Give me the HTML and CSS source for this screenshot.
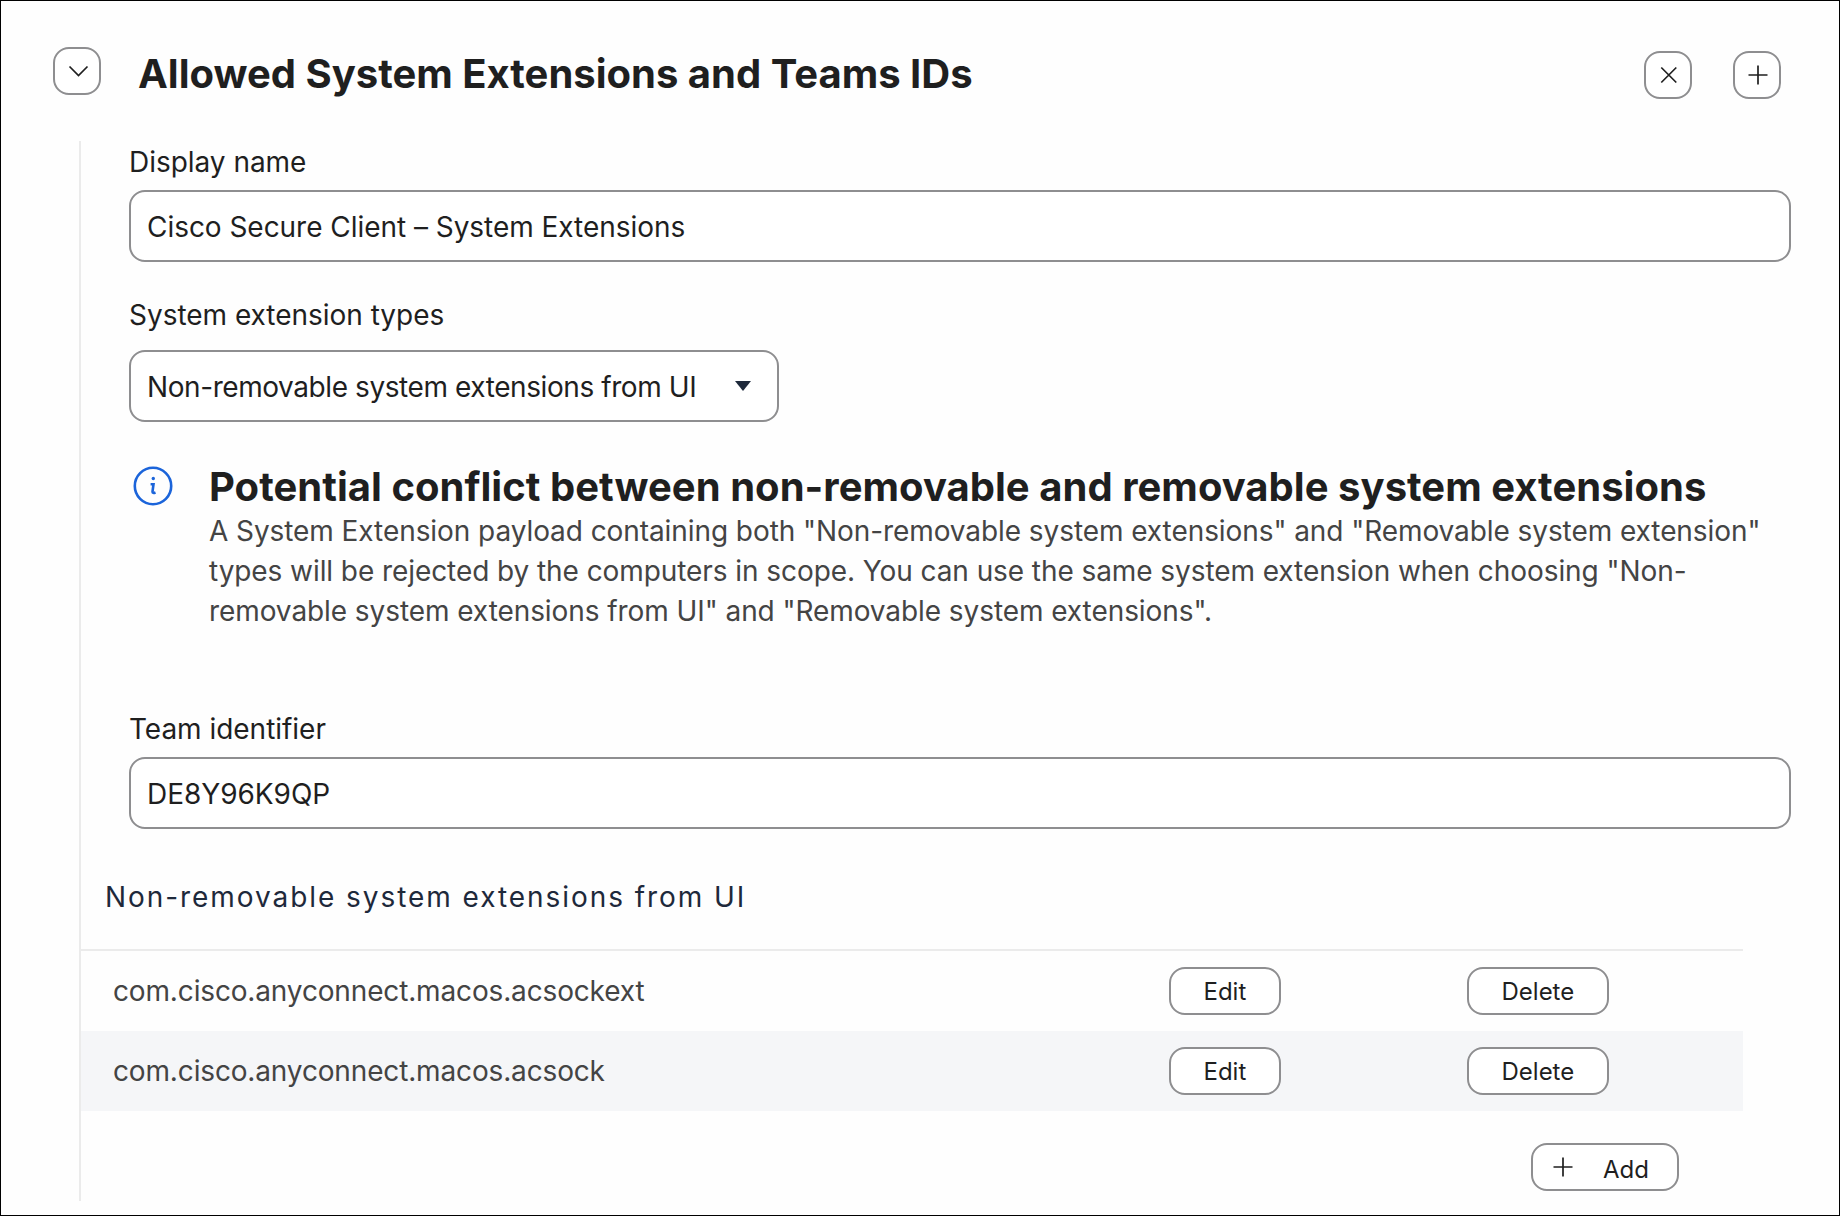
FILE: index.html
```html
<!DOCTYPE html>
<html lang="en">
<head>
  <meta charset="UTF-8">
  <title>Allowed System Extensions and Teams IDs</title>
  <link rel="stylesheet" href="styles.css">
</head>
<body>
  <section class="panel">
    <header class="panel-header">
      <button type="button" class="icon-button toggle-button" aria-label="Collapse">
        <svg class="icon" viewBox="0 0 24 24"><path d="M4.500 7.500l9 9 9-9"/></svg>
      </button>
      <h2 class="panel-title">Allowed System Extensions and Teams IDs</h2>
      <div class="panel-actions">
        <button type="button" class="icon-button" aria-label="Remove">
          <svg class="icon" viewBox="0 0 24 24"><path d="M5.300 4.500l15 15M20.300 4.500l-15 15"/></svg>
        </button>
        <button type="button" class="icon-button" aria-label="Add">
          <svg class="icon" viewBox="0 0 24 24"><path d="M13 2.500v19M3.500 12h19"/></svg>
        </button>
      </div>
    </header>

    <div class="panel-body">
      <div class="field">
        <label for="display-name">Display name</label>
        <input type="text" id="display-name" class="text-input" value="Cisco Secure Client – System Extensions">
      </div>

      <div class="field type-field">
        <label for="extension-type">System extension types</label>
        <button type="button" id="extension-type" class="select">
          <span>Non-removable system extensions from UI</span>
          <svg class="caret" viewBox="0 0 16 10"><path d="M0 0h16l-8 10z"/></svg>
        </button>
      </div>

      <div class="notice">
        <svg class="info-icon" viewBox="0 0 40 40">
          <circle cx="20" cy="20" r="18.200"/>
          <path d="M17.600 18.200h2.900l-1 7.300q-.1 2.200 3 1"/>
          <circle class="dot" cx="20.300" cy="12.500" r="1.700"/>
        </svg>
        <div class="notice-text">
          <h3>Potential conflict between non-removable and removable system extensions</h3>
          <p>A System Extension payload containing both "Non-removable system extensions" and "Removable system extension" types will be rejected by the computers in scope. You can use the same system extension when choosing "Non-removable system extensions from UI" and "Removable system extensions".</p>
        </div>
      </div>

      <div class="field">
        <label for="team-id">Team identifier</label>
        <input type="text" id="team-id" class="text-input" value="DE8Y96K9QP">
      </div>

      <h4 class="list-title">Non-removable system extensions from UI</h4>
      <div class="list">
        <div class="list-row">
          <span class="list-name">com.cisco.anyconnect.macos.acsockext</span>
          <button type="button" class="button">Edit</button>
          <button type="button" class="button">Delete</button>
        </div>
        <div class="list-row">
          <span class="list-name">com.cisco.anyconnect.macos.acsock</span>
          <button type="button" class="button">Edit</button>
          <button type="button" class="button">Delete</button>
        </div>
      </div>
      <div class="list-footer">
        <button type="button" class="button add-button">
          <svg class="icon" viewBox="0 0 24 24"><path d="M12 2.500v19M2.500 12h19"/></svg>
          <span>Add</span>
        </button>
      </div>
    </div>
  </section>
</body>
</html>
```
FILE: styles.css
```css
* {
    box-sizing: border-box;
}

body {
    margin: 0;
    background-color: #fefefe;
    color: #1f1f1f;
    font-family: Inter, sans-serif;
    font-size: 28px;
}

h2, h3, h4, p {
    margin: 0;
}

button, input {
    font-family: inherit;
    color: inherit;
}

.panel {
    height: 1216px;
    border: 1px solid #000;
    overflow: hidden;
}

/* Header */
.panel-header {
    display: flex;
    align-items: flex-start;
    height: 140px;
    padding: 46px 58px 0 52px;
}

.panel-title {
    margin-left: 37px;
    padding-top: 3px;
    font-size: 40px;
    font-weight: 700;
    line-height: 48px;
}

.panel-actions {
    display: flex;
    gap: 41px;
    margin-left: auto;
    padding-top: 4px;
}

.icon-button {
    display: flex;
    align-items: center;
    justify-content: center;
    width: 48px;
    height: 48px;
    padding: 0;
    border: 2px solid #8e8e90;
    border-radius: 16px;
    background-color: #fff;
}

.icon {
    width: 24px;
    height: 24px;
    fill: none;
    stroke: #1f1f1f;
    stroke-width: 1.7;
}

/* Form */
.panel-body {
    height: 1060px;
    margin-left: 78px;
    border-left: 2px solid #ebebeb;
}

.field {
    display: flex;
    flex-direction: column;
    align-items: flex-start;
    padding: 0 48px;
}

.field label {
    height: 49px;
    padding-top: 4px;
    line-height: 34px;
    letter-spacing: -0.03px;
}

.text-input, .select {
    height: 72px;
    border: 2px solid #8e8e90;
    border-radius: 16px;
    background-color: #fff;
    font-size: 28px;
}

.text-input {
    width: 100%;
    padding: 2px 16px 0;
    letter-spacing: -0.04px;
}

.type-field {
    margin-top: 32px;
}

.type-field label {
    height: 56px;
}

.select {
    display: flex;
    align-items: center;
    justify-content: space-between;
    width: 650px;
    padding: 0 26px 0 16px;
    letter-spacing: -0.42px;
}

.select span {
    padding-top: 2px;
}

.caret {
    width: 16px;
    height: 10px;
    fill: #1e293b;
}

/* Notice */
.notice {
    display: flex;
    height: 242px;
    margin-top: 44px;
    padding-left: 52px;
}

.info-icon {
    width: 40px;
    height: 40px;
    flex: none;
    fill: none;
    stroke: #1b64da;
    stroke-width: 2.6;
}

.info-icon .dot {
    fill: #1b64da;
    stroke: none;
}

.notice-text {
    width: 1560px;
    margin-left: 36px;
}

.notice-text h3 {
    padding-bottom: 3px;
    font-size: 40px;
    font-weight: 700;
    letter-spacing: 0.03px;
    line-height: 42px;
}

.notice-text p {
    color: #444;
    letter-spacing: -0.075px;
    line-height: 40px;
}

/* Extension list */
.list-title {
    height: 120px;
    padding: 51px 0 0 24px;
    color: #1e293b;
    font-size: 28px;
    font-weight: 400;
    letter-spacing: 1.94px;
    line-height: 34px;
}

.list {
    width: 1662px;
    border-top: 2px solid #ebebeb;
}

.list-row {
    display: grid;
    grid-template-columns: 1088px 298px auto;
    align-items: center;
    justify-items: start;
    height: 80px;
    color: #444;
}

.list-row:nth-child(even) {
    background-color: #f5f6f8;
}

.list-name {
    padding-left: 32px;
    letter-spacing: -0.15px;
}

.button {
    height: 48px;
    padding: 0 32.5px;
    border: 2px solid #8e8e90;
    border-radius: 16px;
    background-color: #fff;
    color: #1f1f1f;
    font-size: 24px;
}

.list-footer {
    display: flex;
    justify-content: flex-end;
    width: 1598px;
    padding-top: 32px;
}

.add-button {
    display: flex;
    align-items: center;
    gap: 28px;
    padding: 0 28px 0 18px;
}

.add-button span {
    padding-top: 4px;
}
```
